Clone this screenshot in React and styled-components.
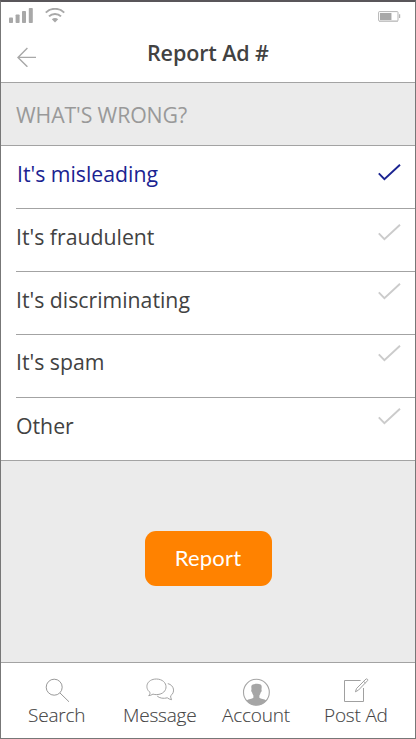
import React, { useState } from 'react'
import styled, { createGlobalStyle } from 'styled-components'

const reasons = [
  { label: "It's misleading", textTop: 14, checkTop: 17, indent: 1 },
  { label: "It's fraudulent", textTop: 14, checkTop: 14, indent: 0 },
  { label: "It's discriminating", textTop: 14, checkTop: 10, indent: 0 },
  { label: "It's spam", textTop: 13, checkTop: 9, indent: 0 },
  { label: 'Other', textTop: 14, checkTop: 9, indent: 0 },
]

const SignalIcon = () => (
  <svg width="24" height="15" viewBox="0 0 24 15" fill="#a8a8a8">
    <rect x="0" y="9.5" width="4" height="5.5" rx="0.8" />
    <rect x="6.6" y="6.5" width="4" height="8.5" rx="0.8" />
    <rect x="13" y="3" width="4" height="12" rx="0.8" />
    <rect x="19.8" y="0" width="4" height="15" rx="0.8" />
  </svg>
)

const WifiIcon = () => (
  <svg width="20" height="16" viewBox="0 0 20 16" fill="none" stroke="#a8a8a8" strokeWidth="2">
    <path d="M.8 4.6C5.8-.4 14.2-.4 19.2 4.6" />
    <path d="M4 8.4C7.3 5.2 12.7 5.2 16 8.4" />
    <path d="M6.8 11.2C8.6 9.7 11.4 9.7 13.2 11.2L10 14.6Z" fill="#a8a8a8" stroke="none" />
  </svg>
)

const BatteryIcon = () => (
  <svg width="23" height="12" viewBox="0 0 23 12">
    <rect x="1" y="9.5" width="19" height="1.5" fill="#d6d6d6" />
    <rect x="0.6" y="0.6" width="19.4" height="9.4" rx="0.8" fill="#fff" stroke="#b4b4b4" />
    <rect x="2" y="2" width="12" height="7" fill="#d8d8d8" />
    <rect x="2" y="2" width="11" height="7" fill="#a8a8a8" />
    <path d="M21 3.2h1.2v3.8h-1.2z" fill="#b4b4b4" />
  </svg>
)

const BackIcon = () => (
  <svg width="20" height="20" viewBox="0 0 20 20" fill="none" stroke="#a8a8a8" strokeWidth="1.4">
    <path d="M11.4 1L2 10.4L11.4 19.8M2 10.4H20" />
  </svg>
)

const CheckIcon = ({ color }) => (
  <svg width="24" height="18" viewBox="0 0 24 18" fill="none" stroke={color} strokeWidth="1.9">
    <path d="M.8 10.4L6.4 16.2L22 1.7" />
  </svg>
)

const SearchIcon = () => (
  <svg width="25" height="25" viewBox="0 0 25 25" fill="none" stroke="#999" strokeWidth="1">
    <circle cx="9.2" cy="9.2" r="8" />
    <path d="M15 15L24 23.8" />
  </svg>
)

const MessageIcon = () => (
  <svg width="29" height="23" viewBox="0 0 29 23" fill="none" stroke="#a3a3a3" strokeWidth="1">
    <path d="M4 14.4C-1.6 10.2 .3 1.1 10.5 1C22.9 1.3 23.4 16.1 10.8 16.6C9.5 16.7 8.2 16.5 7 16.1C5.6 17 4 17.6 2.7 17.7C3.7 16.8 4.2 15.6 4 14.4Z" />
    <path d="M21.8 5.6C28.4 7.1 29.3 14.6 24.6 17.8C24.5 19.4 25.1 20.6 25.6 21.7C23.8 21.5 22.4 20.7 21.3 19.8C17.6 20.9 13.5 20.2 11.2 18.1" />
  </svg>
)

const AccountIcon = () => (
  <svg width="28" height="28" viewBox="0 0 28 28">
    <circle cx="14.4" cy="14.2" r="12.9" fill="#fff" stroke="#a5a5a5" strokeWidth="1.1" />
    <path
      d="M9.3 9C9.2 7.1 10.2 6.2 12 6.2C14.2 5.6 17 5.6 18.6 6.5C20 7.2 19.8 9.6 19.4 11.6C20 12.2 19.5 14 18.8 14.3C18.4 16 17.8 16.8 17.4 17.5V19.7C18.7 21 22.2 21 24.4 22.4C22 25.4 18.4 27.2 14.4 27.2C10.4 27.2 6.8 25.4 4.4 22.4C6.8 21 10 21 11.4 19.7V17.5C10.9 16.7 10.3 15.8 10 14.3C9.3 13.9 8.9 12 9.5 11.6Z"
      fill="#a5a5a5"
    />
  </svg>
)

const PostIcon = () => (
  <svg width="26" height="26" viewBox="0 0 26 26" fill="none" stroke="#a0a0a0" strokeWidth="1">
    <path d="M17.6 3.5H1.5V24.5H20.5V11" />
    <path d="M12.4 14.8L13.6 11.4L23 2C23.8 1.3 25.3 2.7 24.6 3.6L15.5 13.1L12.4 14.8ZM20.6 4.4L22.4 6" />
  </svg>
)

const tabs = [
  { label: 'Search', icon: SearchIcon, left: 28, iconLeft: 17, iconTop: 0 },
  { label: 'Message', icon: MessageIcon, left: 123, iconLeft: 23, iconTop: 0 },
  { label: 'Account', icon: AccountIcon, left: 222, iconLeft: 20, iconTop: 0 },
  { label: 'Post Ad', icon: PostIcon, left: 324, iconLeft: 19, iconTop: -1 },
]

const App = () => {
  const [selected, setSelected] = useState(0)

  return (
    <Screen>
      <GlobalStyle />
      <StatusBar>
        <StatusGroup>
          <SignalIcon />
          <WifiIcon />
        </StatusGroup>
        <BatteryIcon />
      </StatusBar>

      <Header>
        <BackButton><BackIcon /></BackButton>
        <Title>Report Ad #</Title>
      </Header>

      <SectionTitle>WHAT'S WRONG?</SectionTitle>

      <ReasonList>
        {reasons.map((reason, i) => (
          <Reason key={reason.label} onClick={() => setSelected(i)}>
            <ReasonText $top={reason.textTop} $indent={reason.indent} $active={selected === i}>
              {reason.label}
            </ReasonText>
            <CheckWrapper $top={reason.checkTop}>
              <CheckIcon color={selected === i ? '#1a2391' : '#cbcbcb'} />
            </CheckWrapper>
          </Reason>
        ))}
      </ReasonList>

      <Content>
        <ReportButton>Report</ReportButton>
      </Content>

      <TabBar>
        {tabs.map(({ label, icon: Icon, left, iconLeft, iconTop }, i) => (
          <Tab key={label} $width={(i < 3 ? tabs[i + 1].left : 415) - left}>
            <TabIcon $left={iconLeft} $top={iconTop}><Icon /></TabIcon>
            <TabLabel>{label}</TabLabel>
          </Tab>
        ))}
      </TabBar>
    </Screen>
  )
}

const GlobalStyle = createGlobalStyle`
  * {
    box-sizing: border-box;
  }

  body {
    margin: 0;
    font-family: 'Open Sans', sans-serif;
    color: #424242;
  }

  svg {
    display: block;
  }
`

const Screen = styled.div`
  width: 416px;
  height: 739px;
  display: flex;
  flex-direction: column;
  background: #fff;
  border: 1px solid #777;
  border-top: 2px solid #59565a;
  overflow: hidden;
`

const StatusBar = styled.div`
  height: 26px;
  padding: 5px 14px 0 8px;
  display: flex;
  justify-content: space-between;
  align-items: flex-start;

  & > svg {
    margin-top: 4px;
  }
`

const StatusGroup = styled.div`
  display: flex;
  gap: 12px;
  padding-top: 1px;
`

const Header = styled.div`
  height: 55px;
  display: grid;
  grid-template-columns: 146px 1fr;
  border-bottom: 1px solid #a3a3a3;
`

const BackButton = styled.button`
  padding: 19px 0 0 15px;
  border: 0;
  background: none;
  display: flex;
  align-items: flex-start;
`

const Title = styled.h1`
  margin: 0;
  padding-top: 10px;
  font-size: 21.5px;
  line-height: 30px;
  font-weight: 600;
  letter-spacing: -0.12px;
  white-space: nowrap;
`

const SectionTitle = styled.h2`
  margin: 0;
  height: 63px;
  padding: 17px 15px 0;
  background: #ebebeb;
  border-bottom: 1px solid #a3a3a3;
  color: #999;
  font-size: 21.3px;
  line-height: 30px;
  font-weight: 400;
  letter-spacing: -0.12px;
`

const ReasonList = styled.div`
  border-bottom: 1px solid #a3a3a3;
`

const Reason = styled.div`
  height: 63px;
  margin-left: 15px;
  padding-right: 13px;
  display: flex;
  justify-content: space-between;
  align-items: flex-start;
  border-bottom: 1px solid #a3a3a3;
  cursor: pointer;

  &:last-child {
    height: 62px;
    border-bottom: 0;
  }
`

const ReasonText = styled.span`
  padding-top: ${({ $top }) => $top}px;
  padding-left: ${({ $indent }) => $indent}px;
  font-size: 21.25px;
  line-height: 28px;
  color: ${({ $active }) => ($active ? '#1a2391' : '#424242')};
`

const CheckWrapper = styled.div`
  padding-top: ${({ $top }) => $top}px;
`

const Content = styled.div`
  flex: 1;
  padding-top: 70px;
  display: flex;
  justify-content: center;
  align-items: flex-start;
  background: #ebebeb;
`

const ReportButton = styled.button`
  width: 127px;
  height: 55px;
  padding: 0 0 2px;
  border: 0;
  border-radius: 11px;
  background: #ff8200;
  color: #fff;
  font-family: Lato, sans-serif;
  font-size: 22px;
  letter-spacing: 0.2px;
`

const TabBar = styled.div`
  height: 76px;
  padding: 15px 0 0 27px;
  display: flex;
  border-top: 1px solid #a3a3a3;
`

const Tab = styled.div`
  flex: none;
  width: ${({ $width }) => $width}px;
`

const TabIcon = styled.div`
  height: 25px;
  padding-left: ${({ $left }) => $left}px;
  margin-top: ${({ $top }) => $top}px;
  margin-bottom: ${({ $top }) => -$top}px;
`

const TabLabel = styled.div`
  font-size: 19px;
  line-height: 24px;
  font-weight: 300;
  letter-spacing: -0.2px;
  white-space: nowrap;
  -webkit-text-stroke: 0.1px #424242;
`

export default App
